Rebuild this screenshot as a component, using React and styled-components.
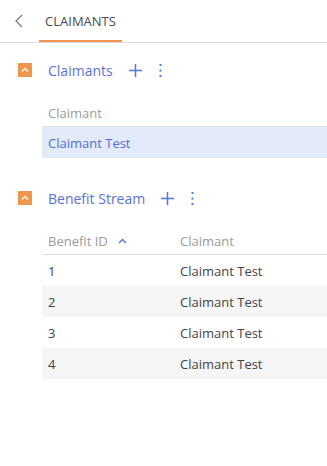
import React from "react";
import styled, { createGlobalStyle } from "styled-components";

const orange = "#f0954b";
const blue = "#4f78dd";
const titleBlue = "#5c72d6";

const GlobalStyle = createGlobalStyle`
  body {
    margin: 0;
    font-family: "Open Sans", "Liberation Sans", sans-serif;
    background: #fff;
    color: #444;
  }
`;

const Page = styled.div`
  width: 327px;
  height: 466px;
  overflow: hidden;
  display: flex;
  flex-direction: column;
`;

const TabBar = styled.div`
  height: 42px;
  display: flex;
  align-items: stretch;
  border-bottom: 1px solid #dcdcdc;
`;

const BackButton = styled.div`
  width: 39px;
  display: flex;
  align-items: center;
  justify-content: center;
  padding-right: 2px;
  box-sizing: border-box;
`;

const Tab = styled.div`
  width: 83px;
  display: flex;
  align-items: center;
  justify-content: center;
  box-sizing: border-box;
  border-bottom: 2px solid ${orange};
  padding-top: 2px;
  font-size: 13px;
  color: #4a4a4a;
  text-transform: uppercase;
`;

const Section = styled.div`
  padding-top: 12px;

  & + & {
    padding-top: 25px;
  }
`;

const SectionHeader = styled.div`
  height: 30px;
  display: flex;
  align-items: center;
  padding-left: 18px;
`;

const Toggle = styled.div`
  width: 14px;
  height: 14px;
  background: ${orange};
  display: flex;
  align-items: center;
  justify-content: center;
  margin-right: 16px;
`;

const SectionTitle = styled.div`
  font-size: 14px;
  color: ${titleBlue};
  margin-right: 16px;
`;

const IconButton = styled.div`
  display: flex;
  align-items: center;
  justify-content: center;
  width: ${(p) => p.$w}px;
  margin-right: ${(p) => p.$gap || 0}px;
`;

const Table = styled.div`
  margin-top: 14px;
  margin-left: 42px;
  display: grid;
  grid-template-columns: ${(p) => p.$cols};
`;

const HeadCell = styled.div`
  height: 27px;
  border-bottom: 1px solid #e0e0e0;
  display: flex;
  align-items: center;
  padding-left: 6px;
  font-size: 13px;
  color: #9b9b9b;
`;

const Cell = styled.div`
  height: 31px;
  display: flex;
  align-items: center;
  padding-left: 6px;
  font-size: 13px;
  color: ${(p) => (p.$selected ? "#4f6fd3" : "#444")};
  background: ${(p) =>
    p.$selected ? "#e3eaf9" : p.$odd ? "#f5f5f5" : "transparent"};
`;

const SortCaret = styled.svg`
  margin-left: 10px;
`;

const ChevronLeft = () => (
  <svg width="10" height="14" viewBox="0 0 10 14">
    <path d="M8 1 L2 7 L8 13" fill="none" stroke="#777" strokeWidth="1.2" />
  </svg>
);

const ToggleIcon = () => (
  <svg width="8" height="6" viewBox="0 0 8 6">
    <path d="M1 4.5 L4 1.5 L7 4.5" fill="none" stroke="#fff" strokeWidth="1.3" />
  </svg>
);

const PlusIcon = () => (
  <svg width="13" height="13" viewBox="0 0 13 13">
    <path d="M6.5 0 V13 M0 6.5 H13" stroke={blue} strokeWidth="1.5" />
  </svg>
);

const DotsIcon = () => (
  <svg width="3" height="13" viewBox="0 0 3 13">
    <rect x="0.5" y="0" width="2" height="2" fill={blue} />
    <rect x="0.5" y="5.5" width="2" height="2" fill={blue} />
    <rect x="0.5" y="11" width="2" height="2" fill={blue} />
  </svg>
);

const SectionBar = ({ title }) => (
  <SectionHeader>
    <Toggle>
      <ToggleIcon />
    </Toggle>
    <SectionTitle>{title}</SectionTitle>
    <IconButton $w={13} $gap={17}>
      <PlusIcon />
    </IconButton>
    <IconButton $w={3}>
      <DotsIcon />
    </IconButton>
  </SectionHeader>
);

const benefits = [1, 2, 3, 4];

const App = () => {
  return (
    <Page>
      <GlobalStyle />
      <TabBar>
        <BackButton>
          <ChevronLeft />
        </BackButton>
        <Tab>Claimants</Tab>
      </TabBar>

      <Section>
        <SectionBar title="Claimants" />
        <Table $cols="1fr">
          <HeadCell>Claimant</HeadCell>
          <Cell $selected>Claimant Test</Cell>
        </Table>
      </Section>

      <Section>
        <SectionBar title="Benefit Stream" />
        <Table $cols="132px 1fr">
          <HeadCell>
            Benefit ID
            <SortCaret width="9" height="6" viewBox="0 0 9 6">
              <path
                d="M1 5 L4.5 1.5 L8 5"
                fill="none"
                stroke={blue}
                strokeWidth="1.4"
              />
            </SortCaret>
          </HeadCell>
          <HeadCell>Claimant</HeadCell>
          {benefits.map((id, i) => (
            <React.Fragment key={id}>
              <Cell $odd={i % 2 === 1}>{id}</Cell>
              <Cell $odd={i % 2 === 1}>Claimant Test</Cell>
            </React.Fragment>
          ))}
        </Table>
      </Section>
    </Page>
  );
};

export default App;
